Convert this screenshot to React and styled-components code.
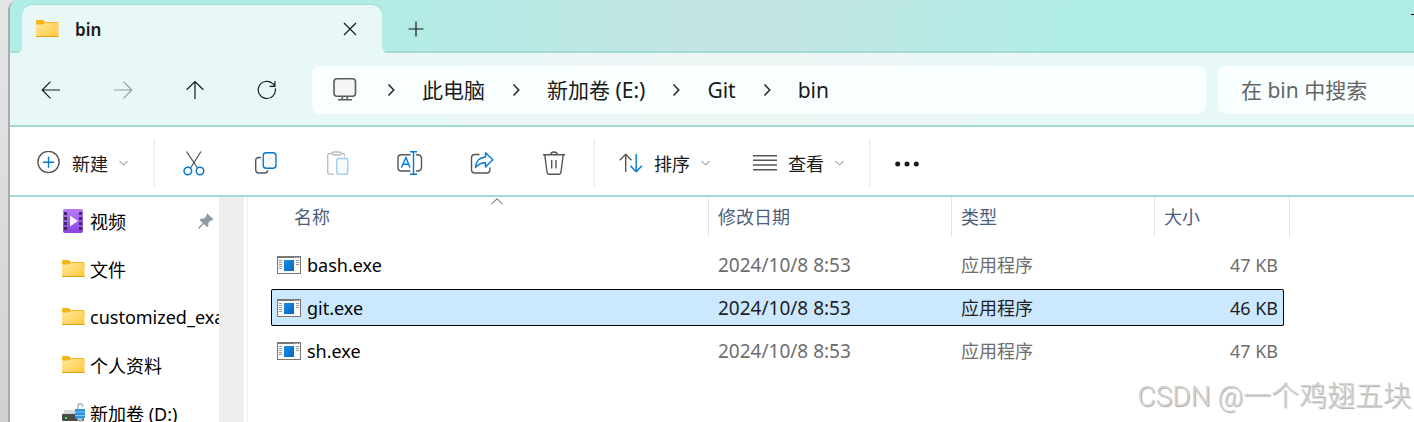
import styled, { createGlobalStyle } from "styled-components"

const sidebarItems = [
  { name: "视频", icon: "video", pinned: true },
  { name: "文件", icon: "folder" },
  { name: "customized_exa", icon: "folder" },
  { name: "个人资料", icon: "folder" },
  { name: "新加卷 (D:)", icon: "drive" }
]

const files = [
  { name: "bash.exe", date: "2024/10/8 8:53", type: "应用程序", size: "47 KB" },
  { name: "git.exe", date: "2024/10/8 8:53", type: "应用程序", size: "46 KB", selected: true },
  { name: "sh.exe", date: "2024/10/8 8:53", type: "应用程序", size: "47 KB" }
]

const crumbs = ["此电脑", "新加卷 (E:)", "Git", "bin"]

const FolderIcon = () => (
  <svg width="24" height="20" viewBox="0 0 24 20">
    <defs>
      <linearGradient id="folder" x1="0" y1="0" x2="1" y2="1">
        <stop offset="0" stopColor="#ffe8a3" />
        <stop offset="1" stopColor="#ffc737" />
      </linearGradient>
    </defs>
    <path d="M0 2.200Q0 1 1.200 1H7L9 3H21.500Q22.500 3 22.500 4V8H0Z" fill="#f8b31b" />
    <path d="M0 5.500H6.500L9 4H22L22.500 4.500V17.500L22 18H0.500L0 17.500Z" fill="url(#folder)" />
    <path d="M0 17.500H22.500" stroke="#e3a01b" />
  </svg>
)

const VideoIcon = () => (
  <svg width="24" height="24" viewBox="0 0 24 24">
    <defs>
      <linearGradient id="video" x1="0" y1="0" x2="0" y2="1">
        <stop offset="0" stopColor="#b67af5" />
        <stop offset="1" stopColor="#8a42e0" />
      </linearGradient>
    </defs>
    <rect x="1" y="0" width="20" height="24" rx="2" fill="url(#video)" />
    <path d="M3.500 3V22M18.500 3V22" stroke="#3d2a63" strokeWidth="3" strokeDasharray="3 2" />
    <path d="M8 6.500L16 12L8 17.500Z" fill="#f5f0fb" />
  </svg>
)

const DriveIcon = () => (
  <svg width="24" height="20" viewBox="0 0 24 20">
    <path d="M3 7H20L22 12H0Z" fill="#d8d8d8" />
    <rect x="0" y="11" width="22" height="7" rx="1" fill="#4b4b4b" />
    <rect x="3" y="14" width="2" height="2" fill="#3fe03f" />
    <path d="M16 6V3Q16 0.800 18.300 0.800Q20.500 0.800 20.500 3V4" fill="none" stroke="#a9b6bf" strokeWidth="1.500" />
    <path d="M13 6H23V15H13Z" fill="#2b94e0" />
    <path d="M13 9H23M13 12.500H23" stroke="#7cc4f5" />
    <path d="M14.500 15H21.500L20 18L18 19.500L16 18Z" fill="#a9b6bf" />
  </svg>
)

const PinIcon = () => (
  <svg width="16" height="16" viewBox="0 0 16 16">
    <path d="M9.300 0.500L15.500 6.300L14.200 7.500L13 7.300L10.500 9.800L10.200 13.200L9 14L5.800 11L1.300 15.700L0.300 15.600L0.400 14.600L4.800 10L1.800 7L2.600 5.800L6 5.400L8.600 3L8.300 1.600Z" fill="#8f9ba3" />
  </svg>
)

const ExeIcon = () => (
  <svg width="24" height="18" viewBox="0 0 24 18">
    <defs>
      <linearGradient id="exe" x1="0" y1="0" x2="1" y2="1">
        <stop offset="0" stopColor="#1690e4" />
        <stop offset="1" stopColor="#0864bd" />
      </linearGradient>
    </defs>
    <rect x="0.500" y="0.500" width="23" height="17" fill="#fafafa" stroke="#777" />
    <path d="M0 1H24" stroke="#777" strokeWidth="2" />
    <path d="M17 1.500H18M19.500 1.500H20.500M22 1.500H23" stroke="#ddd" />
    <path d="M2 4.500H5M2 6.500H5M2 8.500H5M2 10.500H5M2 12.500H5M19 4.500H22M19 6.500H22M19 8.500H22" stroke="#999" />
    <rect x="7" y="4" width="10" height="11" fill="url(#exe)" />
  </svg>
)

const MonitorIcon = () => (
  <svg width="30" height="28" viewBox="0 0 30 28" fill="none" stroke="#5a5c5c" strokeWidth="1.600">
    <rect x="4" y="2.800" width="21.500" height="17.400" rx="3" fill="#f4f6f6" />
    <path d="M12.300 20.500V23.500M17.200 20.500V23.500M8 23.800H22" />
  </svg>
)

const Chevron = () => (
  <svg width="12" height="14" viewBox="0 0 12 14" fill="none" stroke="#222" strokeWidth="1.500">
    <path d="M3.500 1.500L8.800 7L3.500 12.500" />
  </svg>
)

const ChevronDown = () => (
  <svg width="10" height="10" viewBox="0 0 10 10" fill="none" stroke="#777">
    <path d="M0.500 3L4.500 7L8.500 3" />
  </svg>
)

const LineIcon = ({ d }) => (
  <svg width="20" height="20" viewBox="0 0 20 20" fill="none" stroke="currentColor" strokeWidth="1.200">
    <path d={d} />
  </svg>
)

const CutIcon = () => (
  <svg width="26" height="26" viewBox="0 0 26 26" fill="none" stroke="#555" strokeWidth="1.300">
    <path d="M5.500 1.500L16.500 18M20 1.500L9.500 18" />
    <g stroke="#0078d4" strokeWidth="1.500">
      <circle cx="6.800" cy="21" r="3.800" />
      <circle cx="19" cy="21" r="3.800" />
    </g>
  </svg>
)

const CopyIcon = () => (
  <svg width="26" height="26" viewBox="0 0 26 26" fill="none" strokeWidth="1.400">
    <path d="M8 7.500H6Q2.700 7.500 2.700 10.800V19.500Q2.700 23 6 23H11.500Q14.300 23 14.800 20.300" stroke="#555" />
    <rect x="10.200" y="2.700" width="12.800" height="15.600" rx="3" stroke="#0078d4" fill="#f8f9fa" />
  </svg>
)

const PasteIcon = () => (
  <svg width="26" height="26" viewBox="0 0 26 26" fill="none" strokeWidth="1.300">
    <path d="M8.500 3.500H4.500Q2.700 3.500 2.700 5.500V22Q2.700 24.200 4.800 24.200H9M16 3.500H18Q19.500 3.500 19.500 5.500V6.500" stroke="#bbb" />
    <rect x="7.500" y="2" width="8.500" height="3" rx="1.500" stroke="#bbb" />
    <rect x="11.800" y="8.500" width="11" height="15.700" rx="2" stroke="#99c9ee" fill="#f8f9fa" />
  </svg>
)

const RenameIcon = () => (
  <svg width="26" height="26" viewBox="0 0 26 26" fill="none" strokeWidth="1.400">
    <path d="M13.500 4.700H4.500Q1 4.700 1 8.200V17.500Q1 21 4.500 21H13.500M19 4.700H20.500Q24.500 4.700 24.500 8.700V17Q24.500 21 20.500 21H19" stroke="#555" />
    <path d="M4.500 17.500L9 7.500L13 17.500M6.200 14.200H11.700M13 1.700H20M13 24.300H20M16.500 1.700V24.300" stroke="#0078d4" />
  </svg>
)

const ShareIcon = () => (
  <svg width="26" height="26" viewBox="0 0 26 26" fill="none" strokeWidth="1.400" strokeLinejoin="round">
    <path d="M10.500 4.500H6Q2.500 4.500 2.500 8V19.500Q2.500 23 6 23H17.500Q21 23 21 19.500V17.500" stroke="#555" />
    <path d="M16.500 2.700L23.800 9.800L16.500 17V12.800Q11 12.500 6.500 17.500Q7 7.800 16.500 7Z" stroke="#0078d4" />
  </svg>
)

const TrashIcon = () => (
  <svg width="26" height="26" viewBox="0 0 26 26" fill="none" stroke="#555" strokeWidth="1.400">
    <path d="M2 4.700H24M9.700 4.500Q10 2 13 2Q16 2 16.300 4.500M3.800 5L6 22Q6.300 24.300 8.300 24.300H17.500Q19.700 24.300 20 22L22.200 5M10.700 10V18.500M15 10V18.500" />
  </svg>
)

const NewIcon = () => (
  <svg width="24" height="24" viewBox="0 0 24 24" fill="none" strokeWidth="1.400">
    <circle cx="11.500" cy="11" r="10.600" stroke="#555" />
    <path d="M6 11.200H17M11.500 5.700V16.700" stroke="#0078d4" />
  </svg>
)

const SortIcon = () => (
  <svg width="24" height="24" viewBox="0 0 24 24" fill="none" strokeWidth="1.400">
    <path d="M6.700 21V3.500M0.800 9.300L6.700 3.300L12.500 9.300" stroke="#555" />
    <path d="M17.200 3V20.500M11.400 14.700L17.200 20.700L23 14.700" stroke="#0078d4" />
  </svg>
)

const ViewIcon = () => (
  <svg width="24" height="24" viewBox="0 0 24 24" stroke="#555" strokeWidth="1.400">
    <path d="M0 4.700H24M0 9.300H24M0 14H24M0 18.700H24" />
  </svg>
)

const MoreIcon = () => (
  <svg width="26" height="26" viewBox="0 0 26 26" fill="#1a1a1a">
    <circle cx="3.700" cy="14" r="2.500" />
    <circle cx="13" cy="14" r="2.500" />
    <circle cx="22.300" cy="14" r="2.500" />
  </svg>
)

const tools = [
  { label: "剪切", icon: <CutIcon /> },
  { label: "复制", icon: <CopyIcon /> },
  { label: "粘贴", icon: <PasteIcon />, disabled: true },
  { label: "重命名", icon: <RenameIcon /> },
  { label: "共享", icon: <ShareIcon /> },
  { label: "删除", icon: <TrashIcon /> }
]

const sidebarIcons = {
  video: <VideoIcon />,
  folder: <FolderIcon />,
  drive: <DriveIcon />
}

const TabBar = () => (
  <TitleBar>
    <Tab>
      <FolderIcon />
      <TabTitle>bin</TabTitle>
      <TabButton aria-label="关闭">
        <LineIcon d="M4 4L16 16M16 4L4 16" />
      </TabButton>
    </Tab>
    <NewTabButton aria-label="新标签页">
      <LineIcon d="M2.500 10H17.500M10 2.500V17.500" />
    </NewTabButton>
    <MinimizeButton aria-label="最小化" />
  </TitleBar>
)

const Navigation = () => (
  <NavRow>
    <NavButtons>
      <NavButton aria-label="后退"><LineIcon d="M1 10H19M9.500 1.700L1.200 10L9.500 18.300" /></NavButton>
      <NavButton aria-label="前进" disabled><LineIcon d="M1 10H19M10.500 1.700L18.800 10L10.500 18.300" /></NavButton>
      <NavButton aria-label="上移"><LineIcon d="M10 19V1.500M1.700 9.700L10 1.500L18.300 9.700" /></NavButton>
      <NavButton aria-label="刷新"><LineIcon d="M18.300 8.300A8.600 8.600 0 1 1 15.700 3.600L17.700 5.500M17.900 1V6.400H12.500" /></NavButton>
    </NavButtons>
    <AddressBar>
      <MonitorIcon />
      {crumbs.map((crumb) => (
        <Crumb key={crumb}>
          <Chevron />
          <CrumbButton>{crumb}</CrumbButton>
        </Crumb>
      ))}
    </AddressBar>
    <SearchInput type="search" aria-label="搜索" placeholder="在 bin 中搜索" />
  </NavRow>
)

const CommandBar = () => (
  <Toolbar>
    <LabelButton><NewIcon />新建<ChevronDown /></LabelButton>
    <Separator />
    {tools.map((tool) => (
      <IconButton key={tool.label} aria-label={tool.label} disabled={tool.disabled}>
        {tool.icon}
      </IconButton>
    ))}
    <Separator />
    <LabelButton><SortIcon />排序<ChevronDown /></LabelButton>
    <LabelButton><ViewIcon />查看<ChevronDown /></LabelButton>
    <Separator />
    <MoreButton aria-label="更多"><MoreIcon /></MoreButton>
  </Toolbar>
)

const FileTable = () => (
  <Table>
    <thead>
      <HeaderRow>
        <HeaderCell>
          名称
          <SortArrow viewBox="0 0 12 7"><path d="M0.500 6L6 0.800L11.500 6" /></SortArrow>
        </HeaderCell>
        <HeaderCell>修改日期</HeaderCell>
        <HeaderCell>类型</HeaderCell>
        <HeaderCell>大小</HeaderCell>
      </HeaderRow>
    </thead>
    <FileRows>
      {files.map((file) => (
        <FileRow key={file.name} $selected={file.selected}>
          <NameCell><ExeIcon />{file.name}</NameCell>
          <DateCell>{file.date}</DateCell>
          <Cell>{file.type}</Cell>
          <SizeCell>{file.size}</SizeCell>
        </FileRow>
      ))}
    </FileRows>
  </Table>
)

export default function App() {
  return (
    <>
      <GlobalStyle />
      <Desktop>
        <Window>
          <TabBar />
          <Navigation />
          <CommandBar />
          <Content>
            <Sidebar>
              {sidebarItems.map((item) => (
                <SidebarLink href="#" key={item.name}>
                  {sidebarIcons[item.icon]}
                  <SidebarName>{item.name}</SidebarName>
                  {item.pinned && <PinIcon />}
                </SidebarLink>
              ))}
            </Sidebar>
            <ScrollTrack />
            <FilePane>
              <FileTable />
            </FilePane>
          </Content>
        </Window>
        <Watermark>CSDN @一个鸡翅五块</Watermark>
      </Desktop>
    </>
  )
}

const GlobalStyle = createGlobalStyle`
  * {
    box-sizing: border-box;
  }

  body {
    margin: 0;
    font-family: "Noto Sans", "Noto Sans CJK SC", sans-serif;
    font-size: 18px;
    color: #1a1a1a;
  }

  button, input {
    font: inherit;
    color: inherit;
    border: none;
    background: none;
    padding: 0;
  }

  svg {
    flex-shrink: 0;
  }
`

const Desktop = styled.div`
  position: relative;
  height: 100vh;
  padding-left: 8px;
  overflow: hidden;
  background: linear-gradient(#e4e6e8, #cfd1d2);
`

const Window = styled.div`
  display: flex;
  flex-direction: column;
  height: 100%;
  border-left: 2px solid #ababab;
  border-top-left-radius: 10px;
  background: #fff;
  overflow: hidden;
`

const TitleBar = styled.div`
  display: flex;
  align-items: flex-end;
  height: 53px;
  flex-shrink: 0;
  padding-left: 12px;
  border-bottom: 2px solid #a3dcd6;
  background: linear-gradient(100deg, #b0ede6 25%, #c3e4e2 50%, #c3e4e2 54%, #b0ede6 75%);
`

const Tab = styled.div`
  position: relative;
  display: flex;
  align-items: center;
  gap: 15px;
  width: 360px;
  height: 48px;
  margin-bottom: -2px;
  padding: 0 22px 0 14px;
  border-radius: 10px 10px 0 0;
  background: #e8f8f7;
  box-shadow: 0 -1px 1px #9fdcd5;

  &::before,
  &::after {
    content: "";
    position: absolute;
    bottom: 0;
    width: 6px;
    height: 8px;
  }

  &::before {
    left: -6px;
    border-bottom-right-radius: 6px;
    box-shadow: 3px 3px 0 #e8f8f7;
    clip-path: inset(0);
  }

  &::after {
    right: -6px;
    border-bottom-left-radius: 6px;
    box-shadow: -3px 3px 0 #e8f8f7;
    clip-path: inset(0);
  }
`

const TabTitle = styled.span`
  flex: 1;
  font-size: 17px;
  font-weight: 600;
`

const TabButton = styled.button`
  display: flex;
`

const NewTabButton = styled.button`
  display: flex;
  align-items: center;
  justify-content: center;
  width: 48px;
  height: 44px;
  margin-left: 10px;
`

const MinimizeButton = styled.button`
  width: 3px;
  height: 1px;
  margin: 0 0 36px auto;
  background: #000;
`

const NavRow = styled.div`
  display: flex;
  align-items: center;
  height: 74px;
  flex-shrink: 0;
  padding: 2px 0 0 5px;
  border-bottom: 2px solid #a3dad5;
  background: linear-gradient(100deg, #e8f8f7 25%, #eef5f5 50%, #eef5f5 54%, #e8f8f7 75%);
`

const NavButtons = styled.div`
  display: flex;
`

const NavButton = styled.button`
  display: flex;
  align-items: center;
  justify-content: center;
  width: 72px;
  height: 48px;

  &:disabled {
    color: #8fa09f;
  }
`

const AddressBar = styled.nav`
  display: flex;
  align-items: center;
  flex: 1;
  gap: 25px;
  height: 48px;
  margin: 0 12px 0 9px;
  padding-left: 18px;
  border-radius: 8px;
  background: #f9fefe;
`

const Crumb = styled.div`
  display: flex;
  align-items: center;
  gap: 25px;
`

const CrumbButton = styled.button`
  font-size: 21px;
  line-height: 30px;
`

const SearchInput = styled.input`
  width: 196px;
  height: 48px;
  padding-left: 23px;
  border-radius: 8px 0 0 8px;
  background: #f9fefe;
  font-size: 21px;

  &::placeholder {
    color: #626666;
    opacity: 1;
  }
`

const Toolbar = styled.div`
  display: flex;
  align-items: center;
  height: 70px;
  flex-shrink: 0;
  padding: 4px 0 0 6px;
  border-bottom: 2px solid #a3dad5;
`

const LabelButton = styled.button`
  display: flex;
  align-items: center;
  gap: 11px;
  height: 48px;
  padding: 0 21px;
`

const IconButton = styled.button`
  display: flex;
  align-items: center;
  justify-content: center;
  width: 72px;
  height: 48px;
`

const MoreButton = styled(IconButton)`
  width: 66px;
`

const Separator = styled.div`
  width: 2px;
  height: 48px;
  margin: 0 3px;
  background: #f0f0f0;
`

const Content = styled.div`
  display: flex;
  flex: 1;
  min-height: 0;
`

const Sidebar = styled.nav`
  width: 209px;
  flex-shrink: 0;
  overflow: hidden;
`

const SidebarLink = styled.a`
  display: flex;
  align-items: center;
  gap: 4px;
  height: 48px;
  padding-left: 52px;
  color: #000;
  text-decoration: none;

  > svg:last-child {
    margin-right: 5px;
  }
`

const SidebarName = styled.span`
  flex: 1;
  white-space: nowrap;
  overflow: hidden;
`

const ScrollTrack = styled.div`
  width: 25px;
  flex-shrink: 0;
  background: #eee;
`

const FilePane = styled.main`
  flex: 1;
  min-width: 0;
  margin-left: 2px;
  padding-left: 23px;
  border-left: 2px solid #f6f6f6;
`

const Table = styled.table`
  display: block;
  border-spacing: 0;
`

const HeaderRow = styled.tr`
  display: grid;
  grid-template-columns: 424px 243px 203px 135px;
  margin-left: 14px;
`

const HeaderCell = styled.th`
  position: relative;
  height: 40px;
  padding: 0 0 0 9px;
  border-right: 1px solid #e2e2e2;
  color: #4c607a;
  font-weight: 400;
  line-height: 40px;
  text-align: left;
`

const SortArrow = styled.svg`
  position: absolute;
  top: 1px;
  left: calc(50% - 6px);
  width: 12px;
  height: 7px;
  fill: none;
  stroke: #555;
`

const FileRows = styled.tbody`
  display: flex;
  flex-direction: column;
  gap: 6px;
  padding-top: 9px;
`

const FileRow = styled.tr`
  display: grid;
  grid-template-columns: 438px 243px 203px 129px;
  width: max-content;
  height: 37px;
  border-radius: 2px;
  color: ${({ $selected }) => ($selected ? "#1f1f1f" : "#6d6d6d")};
  background: ${({ $selected }) => ($selected ? "#cce8ff" : "none")};
  box-shadow: ${({ $selected }) => ($selected ? "inset 0 0 0 1px #000" : "none")};
`

const Cell = styled.td`
  padding: 0 0 0 9px;
  line-height: 38px;
`

const NameCell = styled(Cell)`
  display: flex;
  align-items: center;
  gap: 6px;
  padding-left: 6px;
  color: #000;
`

const DateCell = styled(Cell)`
  font-size: 19px;
`

const SizeCell = styled(Cell)`
  padding-right: 6px;
  text-align: right;
`

const Watermark = styled.div`
  position: absolute;
  right: 3px;
  bottom: 6px;
  font-family: Roboto, "Noto Sans CJK SC", sans-serif;
  font-size: 28px;
  font-weight: 300;
  line-height: 38px;
  color: #d2d2d2;
  text-shadow: 1px 1px 1px #a6a6a6;
`
